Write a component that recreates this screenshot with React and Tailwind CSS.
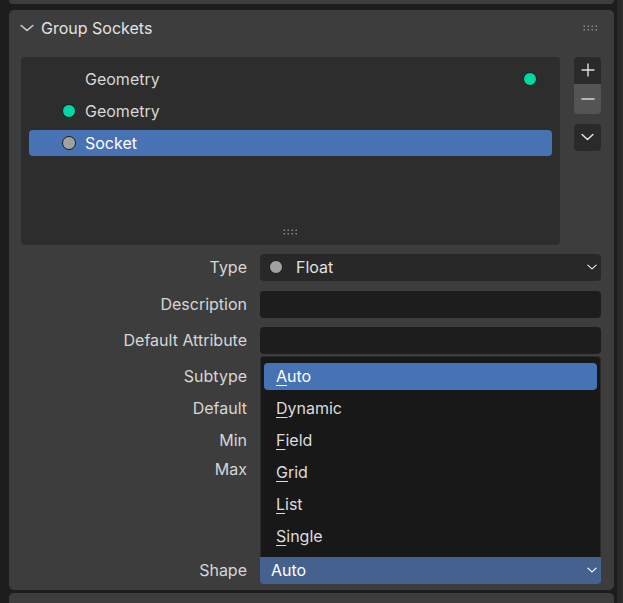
import React from 'react';

const FONT = { fontFamily: 'Inter, "Noto Sans", "Liberation Sans", sans-serif' };

const Chevron = ({ className = '', w = 12, h = 8 }) => (
  <svg className={className} width={w} height={h} viewBox="0 0 12 8" fill="none" preserveAspectRatio="none">
    <path d="M1 1.5 L6 6.5 L11 1.5" stroke="currentColor" strokeWidth="1.4" strokeLinecap="round" strokeLinejoin="round" />
  </svg>
);

const Grip = ({ className = '' }) => (
  <svg className={className} width="16" height="6" viewBox="0 0 16 6">
    {[0, 1, 2, 3].map((i) => (
      <g key={i} fill="#8a8a8a">
        <rect x={i * 4 + 0.5} y="0.5" width="1.5" height="1.5" />
        <rect x={i * 4 + 0.5} y="4" width="1.5" height="1.5" />
      </g>
    ))}
  </svg>
);

const Dot = ({ color }) => (
  <span
    className="block h-[14px] w-[14px] shrink-0 rounded-full border border-[#1a1a1a]"
    style={{ backgroundColor: color }}
  />
);

const SOCKETS = [
  { name: 'Geometry', right: '#00d6a3' },
  { name: 'Geometry', left: '#00d6a3' },
  { name: 'Socket', left: '#a1a1a1', active: true },
];

const SUBTYPES = ['Auto', 'Dynamic', 'Field', 'Grid', 'List', 'Single'];

function Label({ children, className = '' }) {
  return (
    <div className={`flex h-[27px] items-center ${className}`}>
      <div className="w-[239px] pr-[1px] text-right text-[16px] text-[#d6d6d6]">{children}</div>
    </div>
  );
}

export default function App() {
  return (
    <div className="flex h-[603px] w-[623px] overflow-hidden bg-[#1d1d1d]" style={FONT}>
      <div className="ml-[9px] flex w-[605px] flex-col">
        <div className="h-[4px] rounded-b-[5px] bg-[#3d3d3d]" />

        <div className="relative mt-[6px] h-[587px] rounded-[5px] bg-[#3d3d3d]">
          {/* header */}
          <div className="flex h-[36px] items-center pl-[11px] pr-[15px]">
            <Chevron className="text-[#c8c8c8]" w={14} h={8} />
            <span className="ml-[7px] text-[16px] text-[#e2e2e2]">Group Sockets</span>
            <Grip className="ml-auto" />
          </div>

          {/* socket list */}
          <div className="mt-[11px] flex px-[12px]">
            <div className="flex h-[188px] w-[539px] flex-col rounded-[4px] bg-[#2d2d2d] px-[8px] pt-[9px]">
              <div className="flex flex-col gap-[6px]">
                {SOCKETS.map((s, i) => (
                  <div
                    key={i}
                    className={`flex h-[26px] items-center rounded-[4px] ${s.active ? 'bg-[#4772b3] text-white' : 'text-[#d6d6d6]'}`}
                  >
                    <div className="flex w-[56px] justify-end pr-[9px]">
                      {s.left && <Dot color={s.left} />}
                    </div>
                    <span className="text-[16px]">{s.name}</span>
                    {s.right && (
                      <span className="ml-auto mr-[15px]">
                        <Dot color={s.right} />
                      </span>
                    )}
                  </div>
                ))}
              </div>
              <div className="mt-auto mb-[10px] flex justify-center">
                <Grip />
              </div>
            </div>

            <div className="ml-[14px] flex w-[27px] flex-col">
              <div className="flex h-[27px] items-center justify-center rounded-t-[4px] bg-[#2a2a2a] text-[#e0e0e0]">
                <svg width="14" height="14" viewBox="0 0 14 14">
                  <path d="M7 0.5 V13.5 M0.5 7 H13.5" stroke="currentColor" strokeWidth="1.4" />
                </svg>
              </div>
              <div className="flex h-[30px] items-center justify-center rounded-b-[4px] bg-[#545454] text-[#e0e0e0]">
                <svg width="14" height="2" viewBox="0 0 14 2">
                  <path d="M0.5 1 H13.5" stroke="currentColor" strokeWidth="1.4" />
                </svg>
              </div>
              <div className="mt-[10px] flex h-[27px] items-center justify-center rounded-[4px] bg-[#2a2a2a] text-[#e0e0e0]">
                <Chevron w={13} h={8} />
              </div>
            </div>
          </div>

          {/* properties */}
          <div className="mt-[9px] flex flex-col">
            <div className="flex h-[27px] items-center">
              <div className="w-[239px] pr-[1px] text-right text-[16px] text-[#d6d6d6]">Type</div>
              <div className="ml-[12px] flex h-[27px] w-[341px] items-center rounded-[4px] bg-[#282828] pl-[9px] pr-[4px] text-[#e0e0e0]">
                <Dot color="#a1a1a1" />
                <span className="ml-[13px] text-[16px]">Float</span>
                <Chevron className="ml-auto" w={10} h={6} />
              </div>
            </div>
            <div className="mt-[10px] flex h-[27px] items-center">
              <div className="w-[239px] pr-[1px] text-right text-[16px] text-[#d6d6d6]">Description</div>
              <div className="ml-[12px] h-[27px] w-[341px] rounded-[4px] bg-[#1d1d1d]" />
            </div>
            <div className="mt-[9px] flex h-[27px] items-center">
              <div className="w-[239px] pr-[1px] text-right text-[16px] text-[#d6d6d6]">Default Attribute</div>
              <div className="ml-[12px] h-[27px] w-[341px] rounded-[4px] bg-[#1d1d1d]" />
            </div>
            <Label className="mt-[9px]">Subtype</Label>
            <Label className="mt-[5px]">Default</Label>
            <Label className="mt-[5px]">Min</Label>
            <Label className="mt-[2px]">Max</Label>
            <div className="mt-[74px] flex h-[27px] items-center">
              <div className="w-[239px] pr-[1px] text-right text-[16px] text-[#d6d6d6]">Shape</div>
              <div className="ml-[12px] flex h-[27px] w-[341px] items-center rounded-b-[4px] bg-[#44618f] pl-[11px] pr-[4px] text-white">
                <span className="text-[16px]">Auto</span>
                <Chevron className="ml-auto" w={10} h={6} />
              </div>
            </div>
          </div>

          {/* subtype menu */}
          <div className="absolute left-[251px] top-[346px] flex h-[201px] w-[341px] flex-col rounded-t-[4px] border border-b-0 border-[#2b2b2b] bg-[#181818] px-[3px] pt-[6px]">
            {SUBTYPES.map((item, i) => (
              <div
                key={item}
                className={`flex h-[27px] items-center rounded-[4px] pl-[12px] text-[16px] ${i === 0 ? 'bg-[#4772b3] text-white' : 'text-[#dcdcdc]'} ${i > 0 ? 'mt-[5px]' : ''}`}
              >
                <span className="underline decoration-1 underline-offset-[3px]">{item[0]}</span>
                <span>{item.slice(1)}</span>
              </div>
            ))}
          </div>
        </div>

        <div className="mt-[3px] h-[10px] rounded-t-[5px] bg-[#3d3d3d]" />
      </div>
      <div className="ml-[3px] w-[6px] bg-[#2a2a2a]" />
    </div>
  );
}
